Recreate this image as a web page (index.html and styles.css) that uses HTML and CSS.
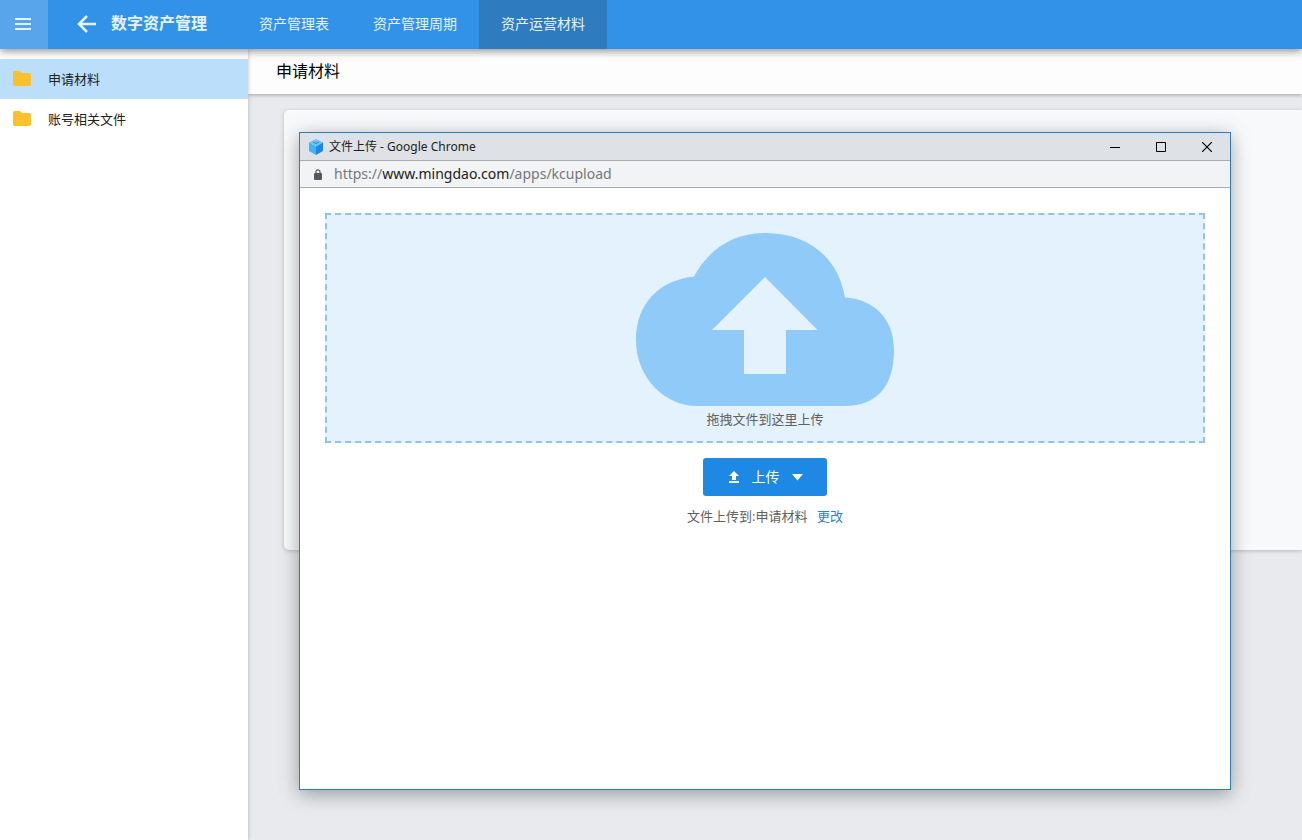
FILE: index.html
```html
<!DOCTYPE html>
<html lang="zh-CN">
<head>
<meta charset="utf-8">
<title>数字资产管理</title>
<link rel="stylesheet" href="styles.css">
</head>
<body>
<div class="app">
  <header class="topbar">
    <button class="menu-btn" type="button" aria-label="菜单">
      <svg width="16" height="12" viewBox="0 0 16 12"><path d="M0 1h16M0 6h16M0 11h16" stroke="currentColor" stroke-width="2"/></svg>
    </button>
    <button class="back-btn" type="button" aria-label="返回">
      <svg width="20" height="18" viewBox="0 0 20 18"><path d="M10 1L2 9l8 8M2 9h17" fill="none" stroke="currentColor" stroke-width="2.5"/></svg>
    </button>
    <h1 class="app-title">数字资产管理</h1>
    <nav class="tabs">
      <a class="tab" href="#">资产管理表</a>
      <a class="tab" href="#">资产管理周期</a>
      <a class="tab tab-active" href="#">资产运营材料</a>
    </nav>
  </header>
  <div class="body">
    <aside class="sidebar">
      <a class="folder folder-active" href="#">
        <svg class="folder-icon" width="18" height="15" viewBox="0 0 18 15"><path d="M1.800 0H7l2 2h7.300Q18 2 18 3.700v9.500Q18 15 16.200 15H1.800Q0 15 0 13.200V1.800Q0 0 1.800 0z" fill="#fbc02d"/></svg>
        <span>申请材料</span>
      </a>
      <a class="folder" href="#">
        <svg class="folder-icon" width="18" height="15" viewBox="0 0 18 15"><path d="M1.800 0H7l2 2h7.300Q18 2 18 3.700v9.500Q18 15 16.200 15H1.800Q0 15 0 13.200V1.800Q0 0 1.800 0z" fill="#fbc02d"/></svg>
        <span>账号相关文件</span>
      </a>
    </aside>
    <main class="main">
      <h2 class="page-title">申请材料</h2>
      <div class="panel"></div>
    </main>
  </div>
</div>

<section class="window" aria-label="文件上传">
  <div class="titlebar">
    <svg class="favicon" width="14" height="16" viewBox="0 0 14 16">
      <path d="M7 0l7 3.500L7 7.500 0 3.500z" fill="#64c8f5"/>
      <path d="M0 3.500l7 4V16l-7-4z" fill="#42b4f5"/>
      <path d="M14 3.500l-7 4V16l7-4z" fill="#1e88e5"/>
      <path d="M4 3q3 3 6 0" fill="none" stroke="#1e88e5"/>
    </svg>
    <span class="window-title">文件上传 - Google Chrome</span>
    <button class="win-btn" type="button" aria-label="最小化"><svg width="10" height="10" viewBox="0 0 10 10"><path d="M0 5.500h10" stroke="#000"/></svg></button>
    <button class="win-btn" type="button" aria-label="最大化"><svg width="10" height="10" viewBox="0 0 10 10"><path d="M.5.5h9v9h-9z" fill="none" stroke="#000"/></svg></button>
    <button class="win-btn" type="button" aria-label="关闭"><svg width="10" height="10" viewBox="0 0 10 10"><path d="M0 0l10 10M10 0L0 10" stroke="#000" stroke-width="1.200"/></svg></button>
  </div>
  <div class="address">
    <svg class="lock" width="8" height="11" viewBox="0 0 8 11"><path d="M2 5V2.800a2 2 0 0 1 4 0V5" fill="none" stroke="#55585c" stroke-width="1.200"/><rect y="4" width="8" height="7" rx="1" fill="#55585c"/></svg>
    <span class="url">https://<span class="url-host">www.mingdao.com</span>/apps/kcupload</span>
  </div>
  <div class="upload">
    <div class="dropzone">
      <svg width="258" height="174" viewBox="0 0 258 174">
        <path d="M129 0C97 0 73 16 58 43.500 25 47 0 69 0 107 0 145 29 173 61 173H209C240 173 258 154 258 117 258 84 236 66 209 64.500 202 24 172 0 129 0z" fill="#90caf9"/>
        <path d="M129 44l52.500 53H150v44h-42V97H76z" fill="#e3f2fd"/>
      </svg>
      <p class="drop-hint">拖拽文件到这里上传</p>
    </div>
    <button class="upload-btn" type="button">
      <svg width="12" height="12" viewBox="0 0 12 12"><path d="M6 0l5 5H8v4H4V5H1zM1 10h10v2H1z" fill="#fff"/></svg>
      <span class="upload-label">上传</span>
      <svg width="11" height="7" viewBox="0 0 11 7"><path d="M0 0h11L5.500 6.500z" fill="#fff"/></svg>
    </button>
    <p class="target">文件上传到:申请材料 <a class="change" href="#">更改</a></p>
  </div>
</section>
</body>
</html>
```

FILE: styles.css
```css
* { box-sizing: border-box; }

body {
  margin: 0;
  font-family: "Open Sans", "Noto Sans CJK SC", sans-serif;
  font-size: 13px;
  color: #212121;
  background: #e8eaed;
}

h1, h2, p { margin: 0; }
a { color: inherit; text-decoration: none; }
svg { display: block; flex: none; }

button {
  display: flex;
  align-items: center;
  justify-content: center;
  padding: 0;
  border: 0;
  background: none;
  color: inherit;
  font: inherit;
}

.app {
  display: flex;
  flex-direction: column;
  min-height: 100vh;
}

.topbar {
  display: flex;
  height: 49px;
  color: #e4f3fe;
  background: #3292e8;
  box-shadow: 0 2px 8px rgba(0, 0, 0, .45);
  z-index: 3;
}

.menu-btn {
  width: 48px;
  padding: 0 2px 1px 0;
  background: #59a5ec;
}

.back-btn {
  margin-left: 29px;
  padding-bottom: 2px;
}

.app-title {
  margin-left: 14px;
  font-size: 16px;
  line-height: 46px;
}

.tabs {
  display: flex;
  margin-left: 30px;
}

.tab {
  padding: 0 22px;
  font-size: 14px;
  line-height: 48px;
}

.tab-active { background: #2f7bbf; }

.body {
  display: flex;
  flex: 1;
}

.sidebar {
  flex: none;
  width: 248px;
  padding-top: 10px;
  background: #fff;
  box-shadow: 0 0 4px rgba(0, 0, 0, .25);
  z-index: 2;
}

.folder {
  display: flex;
  align-items: center;
  gap: 17px;
  height: 40px;
  padding: 0 0 2px 13px;
}

.folder-active { background: #bbdefb; }

.main {
  flex: 1;
  overflow: hidden;
}

.page-title {
  height: 45px;
  padding-left: 28px;
  font-size: 16px;
  font-weight: 400;
  line-height: 44px;
  color: #000;
  background: #fdfdfd;
  box-shadow: 0 1px 4px rgba(0, 0, 0, .3);
}

.panel {
  height: 440px;
  margin: 16px 0 0 36px;
  border-radius: 5px 0 0 5px;
  background: #f8f9fb;
  box-shadow: 0 1px 4px rgba(0, 0, 0, .2);
}

.window {
  position: absolute;
  top: 132px;
  right: 71px;
  bottom: 50px;
  left: 299px;
  z-index: 5;
  border: 1px solid #2f7bbf;
  background: #fff;
  box-shadow: 0 4px 18px rgba(0, 0, 0, .35);
}

.titlebar {
  display: flex;
  align-items: center;
  height: 28px;
  padding-left: 9px;
  border-bottom: 1px solid #a9abae;
  background: #dee1e6;
}

.window-title {
  flex: 1;
  margin-left: 6px;
  font-family: "Noto Sans", "Noto Sans CJK SC", sans-serif;
  font-size: 12px;
  line-height: 26px;
}

.win-btn {
  width: 46px;
  height: 27px;
}

.address {
  display: flex;
  align-items: center;
  height: 27px;
  padding-left: 14px;
  border-bottom: 1px solid #a9abae;
  background: #f1f3f4;
}

.url {
  margin-left: 12px;
  padding-bottom: 2px;
  font-family: "Noto Sans", sans-serif;
  font-size: 14px;
  color: #75787b;
}

.url-host { color: #202124; }

.upload {
  display: flex;
  flex-direction: column;
  align-items: center;
  padding: 25px;
  color: #616161;
}

.dropzone {
  display: flex;
  flex-direction: column;
  align-items: center;
  width: 100%;
  height: 230px;
  padding-top: 18px;
  border: 2px dashed #90c4e8;
  background: #e3f2fd;
}

.drop-hint { line-height: 24px; }

.upload-btn {
  gap: 12px;
  width: 124px;
  height: 38px;
  margin-top: 15px;
  border-radius: 3px;
  font-size: 14px;
  color: #fff;
  background: #1e88e5;
}

.upload-label { padding-bottom: 2px; }

.target {
  margin-top: 10px;
  line-height: 20px;
}

.change {
  margin-left: 6px;
  color: #2f7fd6;
}
```
